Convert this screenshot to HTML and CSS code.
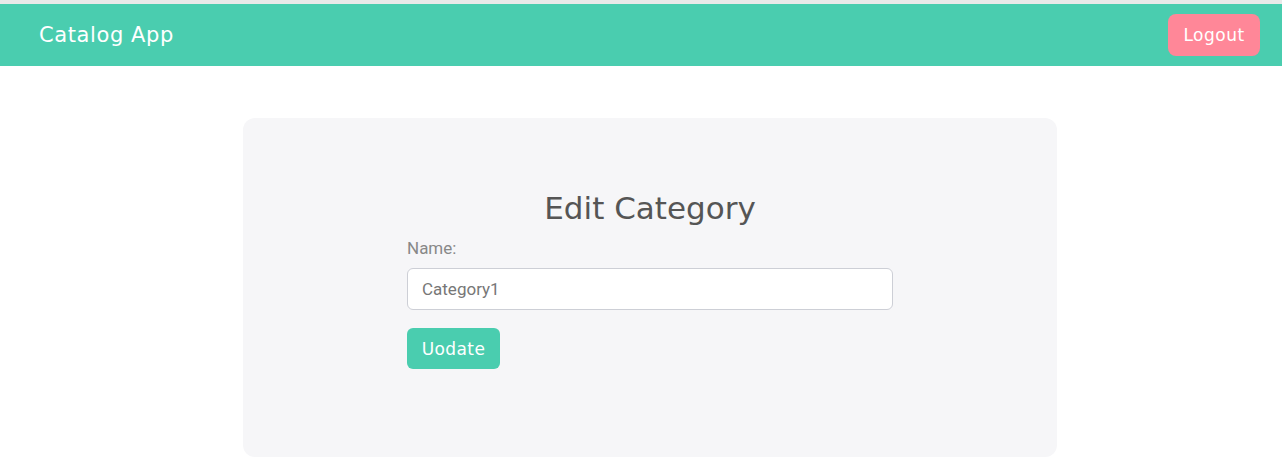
FILE: index.html
```html
<!DOCTYPE html>
<html>
<head>
<meta charset="utf-8">
<link rel="stylesheet" href="styles.css">
</head>
<body>
<div class="topline"></div>
<header class="navbar">
  <span class="brand">Catalog App</span>
  <button class="logout">Logout</button>
</header>
<main class="page">
  <section class="card">
    <h1 class="title">Edit Category</h1>
    <form class="form">
      <label class="label">Name:</label>
      <input class="input" type="text" value="Category1">
      <button type="button" class="submit">Uodate</button>
    </form>
  </section>
</main>
</body>
</html>
```
FILE: styles.css
```css
* { box-sizing: border-box; }
html, body { margin: 0; padding: 0; background: #fff; }
body { font-family: "DejaVu Sans", sans-serif; }
.topline { height: 4px; background: #e9e9e9; }
.navbar {
  height: 62px;
  background: #4acdaf;
  display: flex;
  align-items: center;
  justify-content: space-between;
  padding: 0 22px 0 39px;
}
.brand { color: #fff; font-size: 21px; letter-spacing: 0.6px; }
.logout {
  font-family: "DejaVu Sans", sans-serif;
  background: #ff8798;
  color: #fff;
  border: none;
  border-radius: 8px;
  width: 92px;
  height: 42px;
  font-size: 17px;
  letter-spacing: 0.5px;
  padding: 0;
}
.page {
  display: flex;
  justify-content: center;
  padding: 52px 0 0 18px;
}
.card {
  width: 814px;
  height: 339px;
  background: #f6f6f8;
  border-radius: 12px;
  padding-top: 70px;
  display: flex;
  flex-direction: column;
  align-items: center;
}
.title {
  margin: 0;
  font-weight: normal;
  font-size: 31px;
  color: #555;
  line-height: 40px;
  height: 40px;
}
.form { width: 486px; display: flex; flex-direction: column; align-items: flex-start; }
.label {
  font-family: Roboto, sans-serif;
  font-size: 17px;
  color: #888;
  margin-top: 10px;
  line-height: 20px;
}
.input {
  margin-top: 10px;
  width: 486px;
  height: 42px;
  border: 1px solid #cdcfd6;
  border-radius: 6px;
  padding: 0 14px;
  font-family: Roboto, sans-serif;
  font-size: 17px;
  color: #777;
  background: #fff;
}
.submit {
  margin-top: 18px;
  width: 93px;
  height: 41px;
  border: none;
  border-radius: 6px;
  background: #4acdaf;
  color: #fff;
  font-family: "DejaVu Sans", sans-serif;
  font-size: 17px;
  letter-spacing: 0.4px;
  padding: 0;
}
```
